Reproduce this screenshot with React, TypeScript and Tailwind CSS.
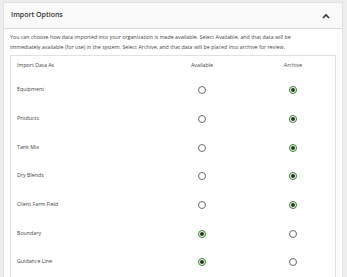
import React from 'react'

const ROWS = [
  { label: 'Equipment', available: false },
  { label: 'Products', available: false },
  { label: 'Tank Mix', available: false },
  { label: 'Dry Blends', available: false },
  { label: 'Client Farm Field', available: false },
  { label: 'Boundary', available: true },
  { label: 'Guidance Line', available: true },
]

function Radio({ checked }: { checked: boolean }) {
  return checked ? (
    <span className="flex h-[8px] w-[8px] items-center justify-center rounded-full border border-[#367c2b] bg-white">
      <span className="h-[4px] w-[4px] rounded-full bg-[#1f3d1a]" />
    </span>
  ) : (
    <span className="h-[8px] w-[8px] rounded-full border border-[#6b6b6b] bg-white" />
  )
}

export default function App() {
  return (
    <div
      className="h-[277px] w-[347px] overflow-hidden bg-[#ededed] px-[3px] pt-[2px] text-[#333]"
      style={{ fontFamily: '"Open Sans", "Liberation Sans", sans-serif' }}
    >
      <div className="mr-[1px] border border-[#e2e2e2] bg-white">
        {/* Header */}
        <div className="flex h-[26px] items-center justify-between border-b border-[#dcdcdc] bg-[#fafafa] pl-[7px] pr-[12px]">
          <span className="text-[7px] font-semibold text-[#333]">Import Options</span>
          <svg width="8" height="6" viewBox="0 0 8 6" aria-hidden="true">
            <path d="M1 5 L4 2 L7 5" fill="none" stroke="#333" strokeWidth="1.6" />
          </svg>
        </div>

        <div className="px-[6px] pb-[3px] pt-[3px]">
          <p className="pr-[20px] text-[5.3px] leading-[10px] text-[#444]">
            You can choose how data imported into your organization is made available. Select Available, and that
            data will be immediately available (for use) in the system. Select Archive, and that data will be placed
            into archive for review.
          </p>

          {/* Table */}
          <div className="mt-[3px] border border-[#e0e0e0] text-[5.3px] text-[#444]">
            <div className="grid h-[20px] grid-cols-[1fr_98px_84px] items-center">
              <span className="pl-[6px]">Import Data As</span>
              <span className="text-center">Available</span>
              <span className="text-center">Archive</span>
            </div>
            {ROWS.map((row) => (
              <div key={row.label} className="grid h-[28.67px] grid-cols-[1fr_98px_84px] items-center">
                <span className="pl-[6px]">{row.label}</span>
                <span className="flex justify-center">
                  <Radio checked={row.available} />
                </span>
                <span className="flex justify-center">
                  <Radio checked={!row.available} />
                </span>
              </div>
            ))}
          </div>
        </div>
      </div>
    </div>
  )
}
